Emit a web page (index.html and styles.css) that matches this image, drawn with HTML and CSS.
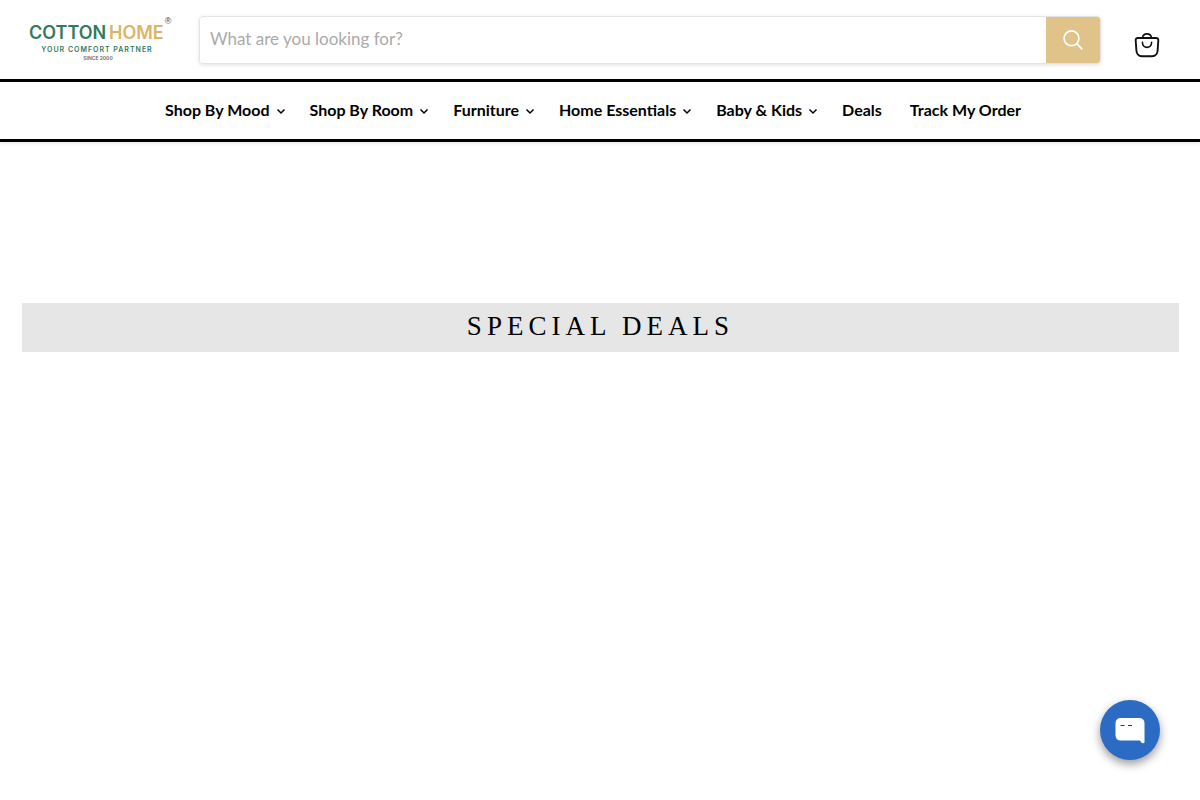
FILE: index.html
```html
<!DOCTYPE html>
<html lang="en">
<head>
    <meta charset="UTF-8">
    <meta name="viewport" content="width=device-width, initial-scale=1.0">
    <title>Cotton Home - Special Deals</title>
    <link rel="stylesheet" href="styles.css">
</head>
<body>
    <header class="site-header">
        <div class="header-main">
            <a class="logo" href="#" aria-label="Cotton Home">
                <svg width="148" height="48" viewBox="0 0 148 48">
                    <text class="logo-name" x="5" y="23"><tspan class="logo-green">COTTON</tspan><tspan class="logo-gold" x="85">HOME</tspan></text>
                    <text class="logo-mark" x="144" y="8">®</text>
                    <text class="logo-tagline" x="73" y="36">YOUR COMFORT PARTNER</text>
                    <text class="logo-since" x="74" y="44">SINCE 2000</text>
                </svg>
            </a>

            <form class="search">
                <input class="search-input" type="text" placeholder="What are you looking for?" aria-label="Search">
                <button class="search-button" type="button" aria-label="Search">
                    <svg width="20" height="20" viewBox="0 0 20 20" fill="none" stroke="#fff" stroke-width="1.7" stroke-linecap="round">
                        <circle cx="8.500" cy="8.300" r="7.400"/>
                        <path d="M13.800 13.600l5 5.200"/>
                    </svg>
                </button>
            </form>

            <a class="cart" href="#" aria-label="Cart">
                <svg width="26" height="26" viewBox="0 0 26 26" fill="none" stroke="#111" stroke-linecap="round">
                    <path stroke-width="1.9" d="M4 6H22Q24.5 6 24.3 8.5L23.6 18.5Q23.2 24.2 18 24.2H8Q2.8 24.2 2.4 18.5L1.7 8.5Q1.5 6 4 6Z"/>
                    <path stroke-width="1.6" d="M8.7 5.2C9.4 .8 16.6 .8 17.3 5.2"/>
                    <path stroke-width="1.6" d="M8.4 10.3C8.4 17 17.6 17 17.6 10.3"/>
                </svg>
            </a>
        </div>

        <nav class="main-nav">
            <a class="nav-link" href="#">Shop By Mood <svg class="arrow" viewBox="0 0 12 12"><path d="M2.500 4.500L6 8l3.500-3.500"/></svg></a>
            <a class="nav-link" href="#">Shop By Room <svg class="arrow" viewBox="0 0 12 12"><path d="M2.500 4.500L6 8l3.500-3.500"/></svg></a>
            <a class="nav-link" href="#">Furniture <svg class="arrow" viewBox="0 0 12 12"><path d="M2.500 4.500L6 8l3.500-3.500"/></svg></a>
            <a class="nav-link" href="#">Home Essentials <svg class="arrow" viewBox="0 0 12 12"><path d="M2.500 4.500L6 8l3.500-3.500"/></svg></a>
            <a class="nav-link" href="#">Baby &amp; Kids <svg class="arrow" viewBox="0 0 12 12"><path d="M2.500 4.500L6 8l3.500-3.500"/></svg></a>
            <a class="nav-link" href="#">Deals</a>
            <a class="nav-link" href="#">Track My Order</a>
        </nav>
    </header>

    <main class="content">
        <h1 class="banner">SPECIAL DEALS</h1>
    </main>

    <button class="chat-button" type="button" aria-label="Chat with us">
        <svg width="30" height="28" viewBox="0 0 30 28">
            <path fill="#fff" d="M6 1H24Q29.500 1 29.500 6.500V25Q29.500 26.500 28 26.300Q26 26 25 23.500H6Q.500 23.500 .500 18V6.500Q.500 1 6 1Z"/>
            <path stroke="#1f3b66" stroke-width="1" d="M5.500 8.500h4M13 8.500h4"/>
        </svg>
    </button>
</body>
</html>
```

FILE: styles.css
```css
* {
    box-sizing: border-box;
}
body {
    margin: 0;
    font-family: Lato, "Liberation Sans", sans-serif;
    background-color: #fff;
    color: #000;
}
.site-header {
    box-shadow: 0 1px 4px rgba(0, 0, 0, 0.12);
}
.header-main {
    display: flex;
    align-items: center;
    padding: 16px 40px 15px 24px;
}
/* Logo */
.logo {
    display: flex;
}
.logo svg {
    overflow: visible;
}
.logo text {
    font-family: Inter, sans-serif;
}
.logo-name {
    font-size: 18px;
    font-weight: 600;
}
.logo-green {
    fill: #357a5c;
}
.logo-gold {
    fill: #dcb468;
}
.logo-name .logo-gold {
    font-weight: 600;
}
.logo .logo-mark {
    font-family: "Liberation Sans", sans-serif;
    font-size: 9px;
    fill: #444;
    text-anchor: middle;
}
.logo-tagline {
    font-size: 7px;
    font-weight: 600;
    letter-spacing: 1px;
    fill: #357a5c;
    text-anchor: middle;
}
.logo-since {
    font-size: 5px;
    font-weight: 600;
    fill: #666;
    text-anchor: middle;
}
/* Search */
.search {
    display: flex;
    flex: 1;
    height: 48px;
    margin: 0 33px 0 27px;
    border: 1px solid #e3e3e3;
    border-radius: 4px;
    box-shadow: 0 1px 4px rgba(0, 0, 0, 0.12);
    overflow: hidden;
}
.search-input {
    flex: 1;
    min-width: 0;
    padding: 0 10px 3px;
    border: none;
    outline: none;
    font-family: inherit;
    font-size: 17px;
    color: #333;
}
.search-input::placeholder {
    color: #aaa;
}
.search-button {
    display: flex;
    align-items: center;
    justify-content: center;
    width: 54px;
    padding: 0;
    border: none;
    background-color: #dfc389;
    cursor: pointer;
}
.cart {
    display: flex;
    padding-top: 10px;
}
/* Navigation */
.main-nav {
    display: flex;
    justify-content: center;
    padding-right: 14px;
    border-top: 3px solid #000;
    border-bottom: 3px solid #000;
}
.nav-link {
    display: flex;
    align-items: center;
    padding: 0 14px 2px;
    font-size: 16px;
    font-weight: 700;
    line-height: 55px;
    color: #000;
    text-decoration: none;
}
.arrow {
    width: 12px;
    height: 12px;
    margin: 2px -5px 0 5px;
    fill: none;
    stroke: #000;
    stroke-width: 1.5;
}
/* Page content */
.content {
    padding: 161px 21px 0 22px;
}
.banner {
    margin: 0;
    padding-bottom: 3px;
    background-color: #e6e6e6;
    font-family: "Liberation Serif", serif;
    font-size: 27px;
    font-weight: 400;
    line-height: 46px;
    letter-spacing: 5px;
    text-align: center;
}
/* Chat */
.chat-button {
    position: fixed;
    right: 40px;
    bottom: 40px;
    display: flex;
    align-items: center;
    justify-content: center;
    width: 60px;
    height: 60px;
    padding: 2px 0 0;
    border: none;
    border-radius: 50%;
    background-color: #2b6bc4;
    box-shadow: 0 4px 10px rgba(0, 0, 0, 0.4);
    cursor: pointer;
}
```
